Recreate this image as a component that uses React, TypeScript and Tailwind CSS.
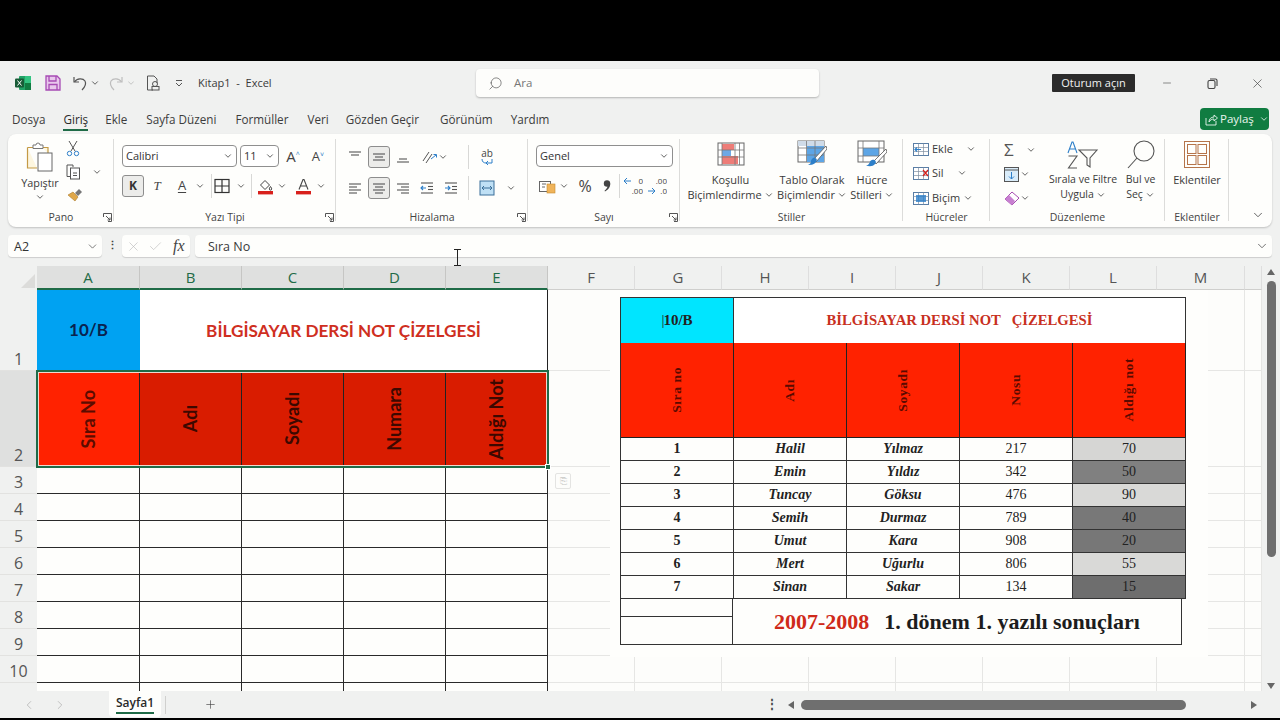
import React from 'react';
import { ChevronDown, Minus, X, Search, ChevronLeft, ChevronRight, Plus, Check } from 'lucide-react';

const Chev = ({ className = '' }: { className?: string }) => (
  <ChevronDown size={10} strokeWidth={2} className={`text-[#444] shrink-0 ${className}`} />
);

const Launcher = () => (
  <svg width="9" height="9" viewBox="0 0 9 9" className="absolute right-[2px] bottom-[5px]" fill="none" stroke="#555" strokeWidth="1">
    <path d="M.5 4V.5H8.5V8.5H5" />
    <path d="M3 3l4 4M7 4.5V7H4.5" />
  </svg>
);

// one alignment button: each row is x1, x2, y of a line
const Lines = ({ rows, boxed = false, arrow }: { rows: [number, number, number][]; boxed?: boolean; arrow?: 'l' | 'r' }) => (
  <div className={`w-[22px] h-[22px] flex items-center justify-center rounded-[3px] ${boxed ? 'bg-[#ececea] border border-[#8d8d8d]' : ''}`}>
    <svg width="14" height="14" viewBox="0 0 14 14" stroke="#555" strokeWidth="1.1" fill="none">
      {rows.map(([a, b, y], i) => (
        <path key={i} d={`M${a} ${y}H${b}`} />
      ))}
      {arrow === 'l' && <path d="M6 7H1M3 5L1 7l2 2" stroke="#2d7fc9" />}
      {arrow === 'r' && <path d="M1 7h5M4 5l2 2-2 2" stroke="#2d7fc9" />}
    </svg>
  </div>
);

const Group = ({ label, w, launcher = true, line = true, children }: { label: string; w: string; launcher?: boolean; line?: boolean; children: React.ReactNode }) => (
  <div className={`relative h-full flex flex-col shrink-0 ${w}`}>
    <div className="flex-1 min-h-0">{children}</div>
    <div className="h-[19px] text-center text-[10.5px] leading-[19px] text-[#444]">{label}</div>
    {launcher && <Launcher />}
    {line && <div className="absolute right-0 top-[5px] bottom-[6px] w-px bg-[#dcdcda]" />}
  </div>
);

const Select = ({ text, w }: { text: string; w: string }) => (
  <div className={`${w} h-[22px] border border-[#8f8f8f] rounded-[4px] flex items-center justify-between pl-[3px] pr-[3px] text-[11px] text-[#333] bg-white`}>
    <span>{text}</span>
    <Chev />
  </div>
);

const BigLabel = ({ a, b, tight = false }: { a: string; b?: string; tight?: boolean }) => (
  <div className={`text-center leading-[15px] text-[#3a3a3a] whitespace-nowrap ${tight ? 'text-[10.5px]' : 'text-[11px]'}`}>
    <div>{a}</div>
    <div className="flex items-center justify-center gap-[2px] h-[15px]">
      {b}
      <Chev />
    </div>
  </div>
);

const Divider = ({ className = '' }: { className?: string }) => <div className={`w-px h-[24px] bg-[#d8d8d6] shrink-0 ${className}`} />;

const ColorBar = ({ kind }: { kind: 'fill' | 'font' }) => (
  <svg width="17" height="17" viewBox="0 0 17 17">
    {kind === 'font' ? (
      <path d="M4 11.500L8 1.500h1l4 10M5.500 8h6" fill="none" stroke="#444" strokeWidth="1.1" />
    ) : (
      <path d="M3.500 7L8 2.500l4.500 4.500L8 11.500zM13.500 8.500c.8 1.200 1.200 1.800 1.200 2.400a1.200 1.200 0 0 1-2.400 0c0-.6.4-1.200 1.200-2.400z" fill="none" stroke="#444" strokeWidth="1" />
    )}
    <rect x="1" y="13" width="15" height="3.400" fill="#d8201c" />
  </svg>
);

const ClipBoard = () => (
  <svg width="30" height="30" viewBox="0 0 30 30">
    <path d="M2.500 5.500h6M17 5.500h6V11M2.500 5.500V26H12" fill="#fdf6df" stroke="#c49a45" strokeWidth="1.2" />
    <path d="M8 6V3h3a2 2 0 0 1 4 0h3v3.500H8z" fill="#fff" stroke="#777" strokeWidth="1" />
    <rect x="13" y="11" width="14" height="18" fill="#fff" stroke="#666" strokeWidth="1" />
  </svg>
);

const CondIcon = () => (
  <svg width="28" height="24" viewBox="0 0 28 24">
    <rect x="1" y="1" width="26" height="22" fill="#fff" stroke="#666" />
    <rect x="5" y="2" width="12" height="6" fill="#ee7d78" />
    <rect x="5" y="8" width="9" height="6" fill="#6ea8e4" />
    <rect x="5" y="14" width="16" height="8" fill="#ee7d78" />
    <path d="M5 1v22M18 1v22M22.500 1v22M1 8h26M1 15h26" stroke="#777" strokeWidth=".8" fill="none" />
  </svg>
);

const TableIcon = () => (
  <svg width="30" height="28" viewBox="0 0 30 28">
    <rect x="1" y="1" width="26" height="21" fill="#fff" stroke="#666" />
    <rect x="1" y="1" width="26" height="5" fill="#cfdbe8" />
    <rect x="10" y="6" width="17" height="16" fill="#5da5e6" />
    <path d="M9.500 1v21M18 1v21M1 8h26M1 15h26" stroke="#777" strokeWidth=".8" fill="none" />
    <path d="M29 6L17 19l2 3L30 9z" fill="#fff" stroke="#555" strokeWidth=".8" />
    <path d="M16 18c3-1 5 2 3 4-2 3-6 3-8 3 2-1 3-2 3-4 0-1 1-2 2-3z" fill="#2d7fc9" />
  </svg>
);

const StyleIcon = () => (
  <svg width="30" height="28" viewBox="0 0 30 28">
    <rect x="1" y="1" width="26" height="21" fill="#fff" stroke="#666" />
    <rect x="6" y="8" width="16" height="8" fill="#5da5e6" />
    <path d="M6 1v21M22 1v21M1 8h26M1 16h26" stroke="#777" strokeWidth=".8" fill="none" />
    <path d="M29 9L17 21l2 3L30 12z" fill="#fff" stroke="#555" strokeWidth=".8" />
    <path d="M15 20c3-1 5 2 3 4-2 3-6 2-9 2 2-1 3-2 4-4 0-1 1-2 2-2z" fill="#2d7fc9" />
  </svg>
);

const CellIcon = ({ kind }: { kind: 'ekle' | 'sil' | 'bicim' }) => (
  <svg width="16" height="15" viewBox="0 0 16 15">
    <rect x=".5" y="1.500" width="15" height="12" fill="#fff" stroke="#5a7ea5" />
    <path d="M5.500 1.500v12M10.500 1.500v12M.5 5.500h15M.5 9.500h15" stroke="#7f8fa0" strokeWidth=".7" />
    {kind === 'ekle' && <path d="M8 7.500H2M4 5.500l-2 2 2 2" fill="none" stroke="#2d7fc9" strokeWidth="1.2" />}
    {kind === 'sil' && <path d="M10 4l5 6M15 4l-5 6" stroke="#d8201c" strokeWidth="1.2" />}
    {kind === 'bicim' && <rect x="3" y="4" width="10" height="7" fill="#2d7fc9" opacity=".8" />}
  </svg>
);

// increase / decrease decimal buttons: digits stay text, the arrow is drawn
const Decimal = ({ top, bottom, dir }: { top: string; bottom: string; dir: 'l' | 'r' }) => (
  <div className="w-[20px] h-[20px] relative text-[8px] leading-[10px] text-right overflow-hidden">
    <div className="h-[10px]">{top}</div>
    <div className="h-[10px]">{bottom}</div>
    <svg width="9" height="8" viewBox="0 0 9 8" fill="none" stroke="#2d7fc9" className={`absolute left-0 ${dir === 'l' ? 'top-px' : 'top-[11px]'}`}>
      {dir === 'l' ? <path d="M8 4H1M4 1L1 4l3 3" /> : <path d="M1 4h7M5 1l3 3-3 3" />}
    </svg>
  </div>
);

const alignLeft: [number, number, number][] = [[1, 13, 3], [1, 9, 6], [1, 13, 9], [1, 9, 12]];
const alignCenter: [number, number, number][] = [[1, 13, 3], [3, 11, 6], [1, 13, 9], [3, 11, 12]];
const alignRight: [number, number, number][] = [[1, 13, 3], [5, 13, 6], [1, 13, 9], [5, 13, 12]];
const indentLines: [number, number, number][] = [[1, 13, 2], [8, 13, 5.5], [8, 13, 8.5], [1, 13, 12]];

const Ribbon = () => (
  <div className="mx-2 w-[1264px] h-[93px] bg-[#fefefc] rounded-[8px] shadow-[0_1px_2px_rgba(0,0,0,0.2)] flex shrink-0 relative">
    <Group label="Pano" w="w-[106px]">
      <div className="flex pt-[8px]">
        <div className="w-[64px] -mr-[6px] flex flex-col items-center">
          <ClipBoard />
          <div className="text-[10.8px] leading-[15px] text-[#3a3a3a] mt-[3px]">Yapıştır</div>
          <Chev className="mt-[2px]" />
        </div>
        <div className="flex flex-col items-start -mt-[2px] gap-[7px]">
          <svg width="14" height="17" viewBox="0 0 14 17" fill="none" stroke="#555" strokeWidth="1">
            <path d="M3 1l6 10M11 1L5 11" />
            <circle cx="3.500" cy="13.500" r="2.200" stroke="#2d7fc9" />
            <circle cx="10.500" cy="13.500" r="2.200" stroke="#2d7fc9" />
          </svg>
          <div className="flex items-center gap-[11px]">
            <svg width="15" height="16" viewBox="0 0 15 16" fill="none" stroke="#555" strokeWidth="1">
              <path d="M4 12.500H1V1h6v2" />
              <rect x="4.500" y="4" width="9" height="11" fill="#fff" />
              <path d="M7 9h4M7 11.500h4" />
            </svg>
            <Chev />
          </div>
          <svg width="17" height="15" viewBox="0 0 17 15">
            <path d="M9 6l4-4 3 3-4 4z" fill="#777" />
            <path d="M2 8l5-3 5 5-3 4z" fill="#e0a84a" stroke="#a97a2a" strokeWidth=".6" />
          </svg>
        </div>
      </div>
    </Group>

    <Group label="Yazı Tipi" w="w-[222px]">
      <div className="pl-[8px] pt-[11px] flex flex-col gap-[8px]">
        <div className="flex items-center">
          <Select text="Calibri" w="w-[115px]" />
          <div className="w-[3px]" />
          <Select text="11" w="w-[39px]" />
          <div className="ml-[2px] w-[24px] text-center text-[15px] leading-[22px] text-[#444]">A<sup className="text-[7px] text-[#2d7fc9] -top-[5px]">^</sup></div>
          <div className="w-[26px] text-center text-[13px] leading-[22px] text-[#444]">A<sup className="text-[7px] text-[#2d7fc9] -top-[4px]">˅</sup></div>
        </div>
        <div className="flex items-center h-[22px]">
          <div className="w-[22px] h-[22px] rounded-[3px] bg-[#ececea] border border-[#8d8d8d] text-center text-[12px] leading-[20px] font-bold text-[#333]">K</div>
          <div className="ml-[6px] w-[14px] text-center text-[13px] italic text-[#444]" style={{ fontFamily: '"Liberation Serif", serif' }}>T</div>
          <div className="ml-[11px] w-[14px] text-center text-[13px] text-[#444] underline underline-offset-2">A</div>
          <Chev className="ml-[6px]" />
          <Divider className="ml-[6px]" />
          <svg width="16" height="16" viewBox="0 0 16 16" fill="none" stroke="#333" strokeWidth="1.2" className="ml-[2px]">
            <rect x="1" y="1.500" width="14" height="13" />
            <path d="M8 1.500v13M1 8h14" />
          </svg>
          <Chev className="ml-[6px]" />
          <Divider className="ml-[5px]" />
          <div className="ml-[5px]"><ColorBar kind="fill" /></div>
          <Chev className="ml-[3px]" />
          <div className="ml-[8px]"><ColorBar kind="font" /></div>
          <Chev className="ml-[4px]" />
        </div>
      </div>
    </Group>

    <Group label="Hizalama" w="w-[192px]">
      <div className="pl-[8px] pt-[11px] flex flex-col gap-[8px]">
        <div className="flex items-center">
          <Lines rows={[[1, 13, 2], [3, 11, 5]]} />
          <div className="w-[2px]" />
          <Lines rows={[[1, 13, 4], [3, 11, 7], [1, 13, 10]]} boxed />
          <div className="w-[2px]" />
          <Lines rows={[[3, 11, 9], [1, 13, 12]]} />
          <svg width="16" height="16" viewBox="0 0 16 16" fill="none" stroke="#555" className="ml-[7px]">
            <path d="M2 12L8 3M5 14l6-9" strokeWidth="1" />
            <path d="M10 10l5-4M12.500 5.500H15.500V8.500" stroke="#2d7fc9" />
          </svg>
          <Chev className="ml-[1px]" />
          <Divider className="ml-[20px]" />
          <div className="ml-[10px] w-[16px] flex flex-col items-center">
            <span className="text-[10px] leading-[10px] text-[#444]">ab</span>
            <svg width="14" height="8" viewBox="0 0 14 8" fill="none" stroke="#2d7fc9">
              <path d="M2 1c0 3 2 4 4 4h6V1M8 3L6 5l2 2" />
            </svg>
          </div>
        </div>
        <div className="flex items-center h-[22px]">
          <Lines rows={alignLeft} />
          <div className="w-[2px]" />
          <Lines rows={alignCenter} boxed />
          <div className="w-[2px]" />
          <Lines rows={alignRight} />
          <div className="w-[2px]" />
          <Lines rows={indentLines} arrow="l" />
          <div className="w-[2px]" />
          <Lines rows={indentLines} arrow="r" />
          <Divider className="ml-[6px]" />
          <svg width="16" height="16" viewBox="0 0 16 16" className="ml-[10px]" fill="#bfe0f5" stroke="#3a6f99">
            <rect x="1" y="1" width="14" height="14" />
            <path d="M3 8h10M3 8l2-2M3 8l2 2M13 8l-2-2M13 8l-2 2" fill="none" />
          </svg>
          <Chev className="ml-[11px]" />
        </div>
      </div>
    </Group>

    <Group label="Sayı" w="w-[152px]">
      <div className="pl-[8px] pt-[11px] flex flex-col gap-[8px]">
        <Select text="Genel" w="w-[137px]" />
        <div className="flex items-center h-[22px] text-[#444]">
          <svg width="17" height="15" viewBox="0 0 17 15" className="ml-[3px]">
            <rect x=".5" y="2.500" width="11" height="10" fill="#fff" stroke="#666" />
            <rect x="8" y="5" width="8" height="9" fill="#f0b45a" stroke="#c58a2c" strokeWidth=".6" />
            <path d="M3 5h4M3 8h3" stroke="#666" />
          </svg>
          <Chev className="ml-[3px]" />
          <div className="ml-[6px] w-[20px] text-center text-[16px] leading-[22px]">%</div>
          <svg width="8" height="12" viewBox="0 0 8 12" className="ml-[8px]" fill="#444">
            <circle cx="4" cy="3.500" r="3.200" />
            <path d="M7.200 3.500C7.500 7 5 10 2 11.500l-.5-.8C3.500 9 4.500 7.500 4.500 6z" />
          </svg>
          <Divider className="ml-[8px]" />
          <div className="ml-[3px]"><Decimal top="0" bottom=".00" dir="l" /></div>
          <div className="ml-[4px]"><Decimal top=".00" bottom=".0" dir="r" /></div>
        </div>
      </div>
    </Group>

    <Group label="Stiller" w="w-[223px]" launcher={false}>
      <div className="flex pt-[8px] pl-[7px]">
        <div className="w-[87px] flex flex-col items-center">
          <div className="h-[24px] flex items-center mb-[6px]"><CondIcon /></div>
          <BigLabel a="Koşullu" b="Biçimlendirme" />
        </div>
        <div className="w-[76px] flex flex-col items-center">
          <div className="h-[24px] flex items-center mb-[6px]"><TableIcon /></div>
          <BigLabel a="Tablo Olarak" b="Biçimlendir" />
        </div>
        <div className="w-[44px] flex flex-col items-center">
          <div className="h-[24px] flex items-center mb-[6px]"><StyleIcon /></div>
          <BigLabel a="Hücre" b="Stilleri" />
        </div>
      </div>
    </Group>

    <Group label="Hücreler" w="w-[87px]" launcher={false}>
      <div className="pl-[10px] pt-[6px] flex flex-col gap-[6px] text-[11px] text-[#3a3a3a]">
        <div className="flex items-center h-[18px] gap-[3px]"><CellIcon kind="ekle" /><span>Ekle</span><Chev className="ml-[10px]" /></div>
        <div className="flex items-center h-[18px] gap-[3px]"><CellIcon kind="sil" /><span>Sil</span><Chev className="ml-[10px]" /></div>
        <div className="flex items-center h-[18px] gap-[3px] mt-px"><CellIcon kind="bicim" /><span>Biçim</span><Chev /></div>
      </div>
    </Group>

    <Group label="Düzenleme" w="w-[175px]" launcher={false}>
      <div className="flex pl-[14px] pt-[7px]">
        <div className="w-[44px] flex flex-col gap-[6px] text-[#555]">
          <div className="flex items-center h-[18px]"><span className="w-[16px] text-[17px] leading-[18px]">Σ</span><Chev className="ml-[6px]" /></div>
          <div className="flex items-center h-[18px]">
            <svg width="15" height="15" viewBox="0 0 15 15" fill="none" stroke="#555">
              <rect x=".5" y=".5" width="14" height="14" fill="#d9ecf9" />
              <path d="M.5 3h14" />
              <path d="M7.500 5v7M5 9.500l2.500 2.500 2.500-2.500" stroke="#2d7fc9" />
            </svg>
            <Chev className="ml-[1px]" />
          </div>
          <div className="flex items-center h-[18px]">
            <svg width="16" height="15" viewBox="0 0 16 15">
              <path d="M1 8l7-7 7 6-7 7z" fill="#fff" stroke="#a64bb0" />
              <path d="M1 8l4-4 6 6-3 4z" fill="#c77fd0" />
            </svg>
            <Chev />
          </div>
        </div>
        <div className="w-[68px] ml-[2px] flex flex-col items-center">
          <svg width="32" height="30" viewBox="0 0 32 30" fill="none" className="-mt-[1px] mb-[2px]">
            <path d="M1 13L5 2h1l4 11M2.500 9h6" stroke="#2d7fc9" strokeWidth="1.1" />
            <path d="M1.500 16H10L1.500 28H10" stroke="#555" strokeWidth="1.1" />
            <path d="M12 10h18l-7 8v9l-3-2v-7z" stroke="#555" strokeWidth="1.1" />
          </svg>
          <BigLabel a="Sırala ve Filtre" b="Uygula" tight />
        </div>
        <div className="w-[50px] -ml-[1px] flex flex-col items-center">
          <svg width="30" height="30" viewBox="0 0 30 30" fill="none" stroke="#555" strokeWidth="1.1" className="-mt-[1px] mb-[2px]">
            <circle cx="18" cy="11" r="10" />
            <path d="M11 18L2 28" />
          </svg>
          <BigLabel a="Bul ve" b="Seç" tight />
        </div>
      </div>
    </Group>

    <Group label="Eklentiler" w="w-[64px]" launcher={false}>
      <div className="flex flex-col items-center pt-[7px]">
        <svg width="26" height="27" viewBox="0 0 26 27" fill="none" stroke="#b5744a" strokeWidth="1">
          <rect x=".5" y=".5" width="25" height="26" />
          <rect x="3.500" y="3.500" width="8.500" height="9" />
          <rect x="14" y="3.500" width="8.500" height="9" />
          <rect x="3.500" y="14.500" width="8.500" height="9" />
          <rect x="14" y="14.500" width="8.500" height="9" />
        </svg>
        <div className="text-[11px] leading-[15px] text-[#3a3a3a] mt-[4px]">Eklentiler</div>
      </div>
    </Group>

    <ChevronDown size={14} strokeWidth={1.4} className="absolute right-[7px] bottom-[5px] text-[#444]" />
  </div>
);

const TitleBar = () => (
  <div className="h-[42px] pt-[2px] flex items-center shrink-0 relative">
    <svg width="16" height="16" viewBox="0 0 16 16" className="ml-[15px]">
      <rect x="4" y="1" width="12" height="14" rx="1" fill="#21a366" />
      <rect x="10" y="1" width="6" height="7" fill="#33c481" />
      <rect x="10" y="8" width="6" height="7" fill="#107c41" />
      <rect x="0" y="3.500" width="9" height="9" rx="1" fill="#185c37" />
      <path d="M2.500 5.500l4 5M6.500 5.500l-4 5" stroke="#fff" strokeWidth="1" />
    </svg>
    <svg width="16" height="16" viewBox="0 0 16 16" className="ml-[14px]" fill="#e8c7ec" stroke="#a74bb4" strokeWidth="1.3">
      <path d="M1 1h11l3 3v11H1z" />
      <path d="M4 1v5h7V1M4 15V9.500h8V15" fill="none" />
    </svg>
    <svg width="16" height="16" viewBox="0 0 16 16" className="ml-[11px]" fill="none" stroke="#555" strokeWidth="1.2">
      <path d="M2 2v5h5" />
      <path d="M2.500 7C5 3 11 3 13 6c2 4-1 7-3 9" />
    </svg>
    <Chev className="ml-[2px]" />
    <svg width="16" height="16" viewBox="0 0 16 16" className="ml-[8px]" fill="none" stroke="#bdbdbd" strokeWidth="1.2">
      <path d="M14 2v5H9" />
      <path d="M13.500 7C11 3 5 3 3 6c-2 4 1 7 3 9" />
    </svg>
    <Chev className="ml-[2px] opacity-30" />
    <svg width="15" height="16" viewBox="0 0 15 16" className="ml-[10px]" fill="none" stroke="#555">
      <path d="M7 15H1.500V1H8l3 3v4" />
      <circle cx="9" cy="9" r="2.500" />
      <rect x="6" y="11.500" width="7" height="3.500" />
    </svg>
    <svg width="10" height="10" viewBox="0 0 10 10" className="ml-[13px]" fill="none" stroke="#555">
      <path d="M2 2.500h6M2 5l3 3 3-3" />
    </svg>
    <div className="ml-[14px] text-[11px] text-[#3a3a3a] whitespace-pre">Kitap1  -  Excel</div>
    <div className="absolute left-[476px] top-[8px] w-[343px] h-[28px] bg-[#fdfdfb] rounded-[4px] shadow-[0_1px_2px_rgba(0,0,0,0.25)] flex items-center pl-[12px]">
      <Search size={15} strokeWidth={1.1} className="text-[#555] -scale-x-100" />
      <span className="ml-[11px] text-[11.5px] text-[#777]">Ara</span>
    </div>
    <div className="ml-auto mr-[145px] w-[83px] h-[18px] bg-[#2b2b2b] rounded-[1px] text-center text-[11px] leading-[18px] text-[#f2f2f2]">Oturum açın</div>
    <Minus size={12} strokeWidth={1.2} className="absolute left-[1161px] top-[16px] text-[#444]" />
    <svg width="11" height="11" viewBox="0 0 11 11" className="absolute left-[1207px] top-[17px]" fill="none" stroke="#444" strokeWidth="1.100">
      <rect x="1" y="2.500" width="7" height="8" rx="1.500" />
      <path d="M3 1h5.500a1.500 1.500 0 0 1 1.500 1.500V8" />
    </svg>
    <X size={15} strokeWidth={1.1} className="absolute left-[1250px] top-[15px] text-[#444]" />
  </div>
);

const MenuBar = () => (
  <div className="h-[31px] pt-[2px] flex items-center pl-[12px] text-[11.7px] text-[#3c3c3c] shrink-0 relative">
    <span>Dosya</span>
    <span className="ml-[18px] relative text-[#2a2a2a]">
      Giriş
      <span className="absolute left-0 right-0 -bottom-[3px] h-[2px] bg-[#1f6b47]" />
    </span>
    <span className="ml-[17px]">Ekle</span>
    <span className="ml-[19px]">Sayfa Düzeni</span>
    <span className="ml-[19px]">Formüller</span>
    <span className="ml-[19px]">Veri</span>
    <span className="ml-[17px]">Gözden Geçir</span>
    <span className="ml-[21px]">Görünüm</span>
    <span className="ml-[18px]">Yardım</span>
    <div className="absolute left-[1200px] top-[5px] w-[69px] h-[22px] bg-[#107c41] rounded-[4px] flex items-center pl-[5px] text-[#e8f5ee] text-[11.5px]">
      <svg width="13" height="13" viewBox="0 0 13 13" fill="none" stroke="#e8f5ee" strokeWidth=".9">
        <path d="M1 5v7h10V8" />
        <path d="M4 9c0-3 2-5 5-5V2l3.500 3L9 8V6C7 6 5 7 4 9z" />
      </svg>
      <span className="ml-[2px]">Paylaş</span>
      <ChevronDown size={10} strokeWidth={2} className="ml-[5px] text-[#e8f5ee]" />
    </div>
  </div>
);

const FormulaBar = () => (
  <div className="mt-2 h-[22px] flex items-stretch pl-2 shrink-0 relative">
    <div className="w-[94px] bg-[#fefefc] rounded-[4px] shadow-[0_1px_1px_rgba(0,0,0,0.15)] flex items-center justify-between pl-[6px] pr-[3px] text-[12.5px] text-[#333]">
      <span className="pt-[2px]">A2</span>
      <ChevronDown size={13} strokeWidth={1.4} className="text-[#555]" />
    </div>
    <div className="w-5 text-center text-[11px] leading-[20px] text-[#444] font-bold">⋮</div>
    <div className="w-[68px] bg-[#fefefc] rounded-[4px] shadow-[0_1px_1px_rgba(0,0,0,0.15)] flex items-center pl-[4px] text-[#b8b8b8]">
      <X size={15} strokeWidth={1} />
      <Check size={15} strokeWidth={1} className="ml-[7px]" />
      <span className="ml-[10px] text-[16px] italic text-[#444]" style={{ fontFamily: '"Liberation Serif", serif' }}>fx</span>
    </div>
    <div className="ml-[5px] w-[1077px] bg-[#fefefc] rounded-[4px] shadow-[0_1px_1px_rgba(0,0,0,0.15)] flex items-center justify-between pl-[13px] pr-[3px] text-[12.5px] text-[#3a3a3a]">
      <span className="pt-[2px]">Sıra No</span>
      <ChevronDown size={14} strokeWidth={1.4} className="text-[#555]" />
    </div>
    <svg width="9" height="17" viewBox="0 0 9 17" className="absolute left-[453px] top-[14px]" fill="none" stroke="#222" strokeWidth="1">
      <path d="M1 .5h7M1 16.500h7M4.500 .5v16" />
    </svg>
  </div>
);

const rowHeights = [81, 96, 27, 27, 27, 27, 27, 27, 27, 27, 27];
const colsAE: [string, string][] = [['A', 'w-[103px]'], ['B', 'w-[102px]'], ['C', 'w-[102px]'], ['D', 'w-[102px]'], ['E', 'w-[102px]']];
const colsRest: [string, string][] = [
  ['F', 'w-[87px]'], ['G', 'w-[87px]'], ['H', 'w-[87px]'], ['I', 'w-[87px]'], ['J', 'w-[87px]'], ['K', 'w-[87px]'], ['L', 'w-[87px]'], ['M', 'w-[88px]'], ['', 'w-[17px]'],
];
const headerTitles = ['Sıra No', 'Adı', 'Soyadı', 'Numara', 'Aldığı Not'];

const ColHeaders = () => (
  <div className="mt-[9px] h-[24px] flex shrink-0 text-[15px] w-[1262px]" style={{ fontFamily: '"Open Sans", sans-serif' }}>
    <div className="w-[37px] relative overflow-hidden">
      <div className="absolute right-[2px] bottom-[2px] w-0 h-0 border-l-[14px] border-l-transparent border-b-[14px] border-b-[#dcdcda]" />
    </div>
    {colsAE.map(([c, w]) => (
      <div key={c} className={`${w} bg-[#dfe0df] border-r border-[#c6c6c4] border-b-2 border-b-[#1f6b47] text-center leading-[22px] text-[#1f6b47]`}>{c}</div>
    ))}
    {colsRest.map(([c, w], i) => (
      <div key={i} className={`${w} border-r border-[#dedede] border-b border-b-[#cfcfcd] text-center leading-[22px] text-[#555]`}>{c}</div>
    ))}
  </div>
);

const RowHead = ({ n, h, selected }: { n: number; h: number; selected?: boolean }) => (
  <div
    className={`w-[37px] shrink-0 flex items-end justify-center text-[16px] leading-[20px] pb-[1px] text-[#555] border-b border-[#e2e2e0] ${selected ? 'bg-[#dfe0df]' : 'bg-[#f0f1f0]'}`}
    style={{ fontFamily: '"Open Sans", sans-serif', height: h }}
  >
    {n <= 10 ? n : ''}
  </div>
);

const RestCells = () => (
  <div className="flex">
    {colsRest.map(([, w], i) => (
      <div key={i} className={`${w} h-full border-r border-b border-[#e6e6e4]`} />
    ))}
  </div>
);

const Sheet = () => (
  <div className="relative h-[401px] w-[1262px] overflow-hidden bg-[#fdfdfb] shrink-0" style={{ fontFamily: 'Lato, sans-serif' }}>
    {rowHeights.map((h, r) => (
      <div key={r} className="flex" style={{ height: h }}>
        <RowHead n={r + 1} h={h} selected={r === 1} />
        {r === 0 && (
          <>
            <div className="w-[103px] bg-[#00a2f2] flex items-center justify-center text-[17px] font-bold text-[#0a2350] pb-[1px]">10/B</div>
            <div className="w-[408px] bg-white border-r-[1.5px] border-[#222] flex items-center justify-center text-[17.2px] font-bold text-[#cf2f1f]">BİLGİSAYAR DERSİ NOT ÇİZELGESİ</div>
          </>
        )}
        {r === 1 &&
          headerTitles.map((t, i) => (
            <div key={t} className={`${colsAE[i][1]} flex items-center justify-center border-r-[1.5px] border-[#222] ${i === 0 ? 'bg-[#ff2200] text-[#5c0c00]' : 'bg-[#d91c00] text-[#3c0800]'}`}>
              <span className="[writing-mode:vertical-rl] rotate-180 text-[18px] font-bold whitespace-nowrap">{t}</span>
            </div>
          ))}
        {r > 1 && colsAE.map(([c, w]) => <div key={c} className={`${w} border-r-[1.5px] border-b-[1.5px] border-[#2a2a2a] bg-[#fefefc]`} />)}
        <RestCells />
      </div>
    ))}

    {/* selection around A2:E2 */}
    <div className="absolute left-[36px] top-[80px] w-[513px] h-[98px] border-2 border-[#1f6b47] shadow-[inset_0_0_0_1px_#efd9cf] pointer-events-none" />
    <div className="absolute left-[545px] top-[174px] w-[6px] h-[6px] bg-[#1f6b47] border border-white" />
    <div className="absolute left-[555px] top-[183px] w-[16px] h-[16px] border border-[#e4e4e2] rounded-[2px] text-[#d0d0ce] text-[9px] leading-[14px] text-center">⎘</div>

    <Picture />
  </div>
);

const rows = [
  ['1', 'Halil', 'Yılmaz', '217', '70', 'bg-[#d6d6d4]'],
  ['2', 'Emin', 'Yıldız', '342', '50', 'bg-[#808080]'],
  ['3', 'Tuncay', 'Göksu', '476', '90', 'bg-[#d9d9d7]'],
  ['4', 'Semih', 'Durmaz', '789', '40', 'bg-[#787878]'],
  ['5', 'Umut', 'Kara', '908', '20', 'bg-[#777777]'],
  ['6', 'Mert', 'Uğurlu', '806', '55', 'bg-[#d9d9d7]'],
  ['7', 'Sinan', 'Sakar', '134', '15', 'bg-[#6e6e6e]'],
];
const picHeaders = ['Sıra no', 'Adı', 'Soyadı', 'Nosu', 'Aldığı not'];

// pasted image of the finished table, floats over the sheet
const Picture = () => (
  <div className="absolute left-[610px] top-0 w-[598px] h-[367px] bg-[#fefefc] pt-[7px] pl-[10px]" style={{ fontFamily: '"Liberation Serif", serif' }}>
    <div className="w-[566px] border-t-[1.5px] border-l-[1.5px] border-[#333]">
      <div className="flex h-[45px]">
        <div className="w-[113px] bg-[#00e5ff] border-r border-[#333] flex items-center justify-center text-[15px] font-bold text-[#222]"><span className="font-normal -mr-[1px]">|</span>10/B</div>
        <div className="w-[452px] bg-white border-r-[1.5px] border-[#333] flex items-center justify-center text-[14.7px] font-bold text-[#c8301e] whitespace-pre">BİLGİSAYAR DERSİ NOT   ÇİZELGESİ</div>
      </div>
      <div className="flex h-[95px] bg-[#ff2200] border-b-[1.5px] border-[#222]">
        {picHeaders.map((t) => (
          <div key={t} className="w-[113px] border-r-[1.5px] border-[#222] flex items-center justify-center">
            <span className="[writing-mode:vertical-rl] rotate-180 text-[13.5px] font-bold text-[#5a0a00] whitespace-nowrap tracking-[0.6px]">{t}</span>
          </div>
        ))}
      </div>
      {rows.map((r) => (
        <div key={r[0]} className="flex h-[23px] border-b-[1.5px] border-[#333] text-[14px] leading-[22px] text-[#222] text-center">
          <div className="w-[113px] border-r-[1.5px] border-[#333] font-bold">{r[0]}</div>
          <div className="w-[113px] border-r-[1.5px] border-[#333] font-bold italic">{r[1]}</div>
          <div className="w-[113px] border-r-[1.5px] border-[#333] font-bold italic">{r[2]}</div>
          <div className="w-[113px] border-r-[1.5px] border-[#333]">{r[3]}</div>
          <div className={`w-[113px] border-r-[1.5px] border-[#333] ${r[5]}`}>{r[4]}</div>
        </div>
      ))}
    </div>
    <div className="w-[562px] h-[46px] flex border-l-[1.5px] border-r-[1.5px] border-b-[1.5px] border-[#333]">
      <div className="w-[112px] border-r border-[#333] flex flex-col">
        <div className="h-[18px] border-b border-[#333]" />
      </div>
      <div className="flex-1 flex items-center pl-[41px] text-[22px] font-bold whitespace-nowrap text-[#1c1c1c]">
        <span className="text-[#cf2a1a]">2007-2008</span>
        <span className="ml-[15px]">1. dönem 1. yazılı sonuçları</span>
      </div>
    </div>
  </div>
);

const VScroll = () => (
  <div className="absolute left-[1262px] top-[205px] w-[18px] h-[425px] flex flex-col items-center">
    <div className="mt-[3px] w-0 h-0 border-x-[4px] border-x-transparent border-b-[6px] border-b-[#666]" />
    <div className="mt-[6px] w-[9px] h-[276px] rounded-full bg-[#6f6f6f]" />
    <div className="mt-auto mb-[2px] w-0 h-0 border-x-[4px] border-x-transparent border-t-[6px] border-t-[#666]" />
  </div>
);

const TabBar = () => (
  <div className="h-[27px] flex items-center shrink-0 text-[#555] relative">
    <ChevronLeft size={14} strokeWidth={1.2} className="ml-[22px] text-[#aaa]" />
    <ChevronRight size={14} strokeWidth={1.2} className="ml-[17px] text-[#aaa]" />
    <div className="ml-[42px] w-[52px] h-[26px] self-start bg-[#fefefc] rounded-b-[4px] text-center text-[12px] leading-[24px] font-semibold text-[#2a2a2a] relative" style={{ fontFamily: '"Open Sans", sans-serif' }}>
      Sayfa1
      <div className="absolute left-[7px] right-[7px] bottom-[3px] h-[2px] bg-[#1f6b47]" />
    </div>
    <div className="ml-[4px] w-px h-[18px] bg-[#d0d0ce]" />
    <Plus size={13} strokeWidth={1.2} className="ml-[38px] text-[#444]" />
    <div className="absolute left-[766px] top-[6px] text-[12px] leading-[14px] font-bold text-[#444]">⋮</div>
    <div className="absolute left-[788px] top-[10px] w-0 h-0 border-y-[4px] border-y-transparent border-r-[6px] border-r-[#666]" />
    <div className="absolute left-[801px] top-[9px] w-[385px] h-[10px] rounded-full bg-[#6f6f6f]" />
    <div className="absolute left-[1251px] top-[10px] w-0 h-0 border-y-[4px] border-y-transparent border-l-[6px] border-l-[#666]" />
  </div>
);

export default function App() {
  return (
    <div className="w-[1280px] h-[720px] overflow-hidden bg-black">
      <div className="h-[61px]" />
      <div className="h-[657px] bg-[#f0f1f0] flex flex-col relative" style={{ fontFamily: '"Open Sans", sans-serif' }}>
        <TitleBar />
        <MenuBar />
        <Ribbon />
        <FormulaBar />
        <ColHeaders />
        <Sheet />
        <TabBar />
        <VScroll />
      </div>
    </div>
  );
}
